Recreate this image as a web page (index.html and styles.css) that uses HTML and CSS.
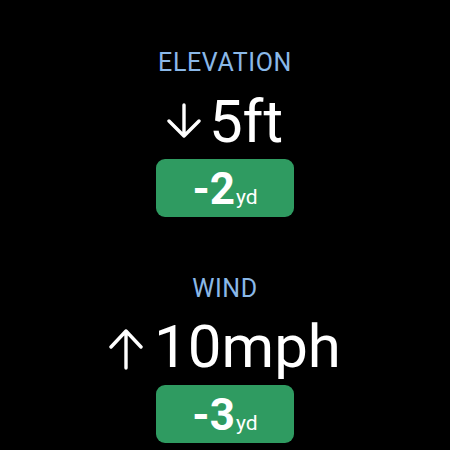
FILE: index.html
```html
<!DOCTYPE html>
<html>
<head>
<meta charset="utf-8">
<link rel="stylesheet" href="styles.css">
</head>
<body>
<main class="screen">
  <section class="stat stat-elev">
    <div class="label">ELEVATION</div>
    <div class="value">
      <svg class="arrow arrow-down" viewBox="0 0 34 36" width="34" height="36">
        <path d="M17 2 V33 M2 18 L17 33 L32 18" fill="none" stroke="#fff" stroke-width="3.4" stroke-linecap="round" stroke-linejoin="round"/>
      </svg>
      <span class="num">5ft</span>
    </div>
    <div class="badge"><span class="big">-2</span><span class="unit">yd</span></div>
  </section>
  <section class="stat stat-wind">
    <div class="label">WIND</div>
    <div class="value">
      <svg class="arrow arrow-up" viewBox="0 0 34 42" width="34" height="42">
        <path d="M17 3 V40 M2 19 L17 3 L32 19" fill="none" stroke="#fff" stroke-width="3.4" stroke-linecap="round" stroke-linejoin="round"/>
      </svg>
      <span class="num">10mph</span>
    </div>
    <div class="badge"><span class="big">-3</span><span class="unit">yd</span></div>
  </section>
</main>
</body>
</html>
```
FILE: styles.css
```css
html, body {
  margin: 0;
  padding: 0;
  background: #000;
}
body {
  width: 450px;
  height: 450px;
  overflow: hidden;
  font-family: Roboto, "Noto Sans", sans-serif;
  color: #fff;
}
.screen {
  display: flex;
  flex-direction: column;
  align-items: center;
  padding-top: 48px;
}
.stat {
  display: flex;
  flex-direction: column;
  align-items: center;
}
.stat-wind {
  margin-top: 57px;
}
.label {
  font-size: 25px;
  line-height: 29px;
  color: #8ab8e8;
  letter-spacing: 0.6px;
}
.value {
  display: flex;
  align-items: center;
  margin-top: 13px;
  height: 64px;
}
.stat-wind .value {
  margin-top: 12px;
}
.num {
  font-size: 60px;
  line-height: 64px;
}
.arrow {
  display: block;
  margin-right: 8px;
}
.arrow-down {
  margin-top: -2px;
}
.arrow-up {
  margin-top: 4px;
  margin-right: 11px;
}
.badge {
  margin-top: 5px;
  width: 138px;
  height: 58px;
  box-sizing: border-box;
  background: #2f9b61;
  border-radius: 9px;
  display: flex;
  justify-content: center;
  align-items: baseline;
  padding-top: 3px;
  line-height: 55px;
}
.stat-wind .badge {
  margin-top: 6px;
}
.big {
  font-size: 44px;
  font-weight: 700;
}
.unit {
  font-size: 21px;
  margin-left: 1px;
}
```
